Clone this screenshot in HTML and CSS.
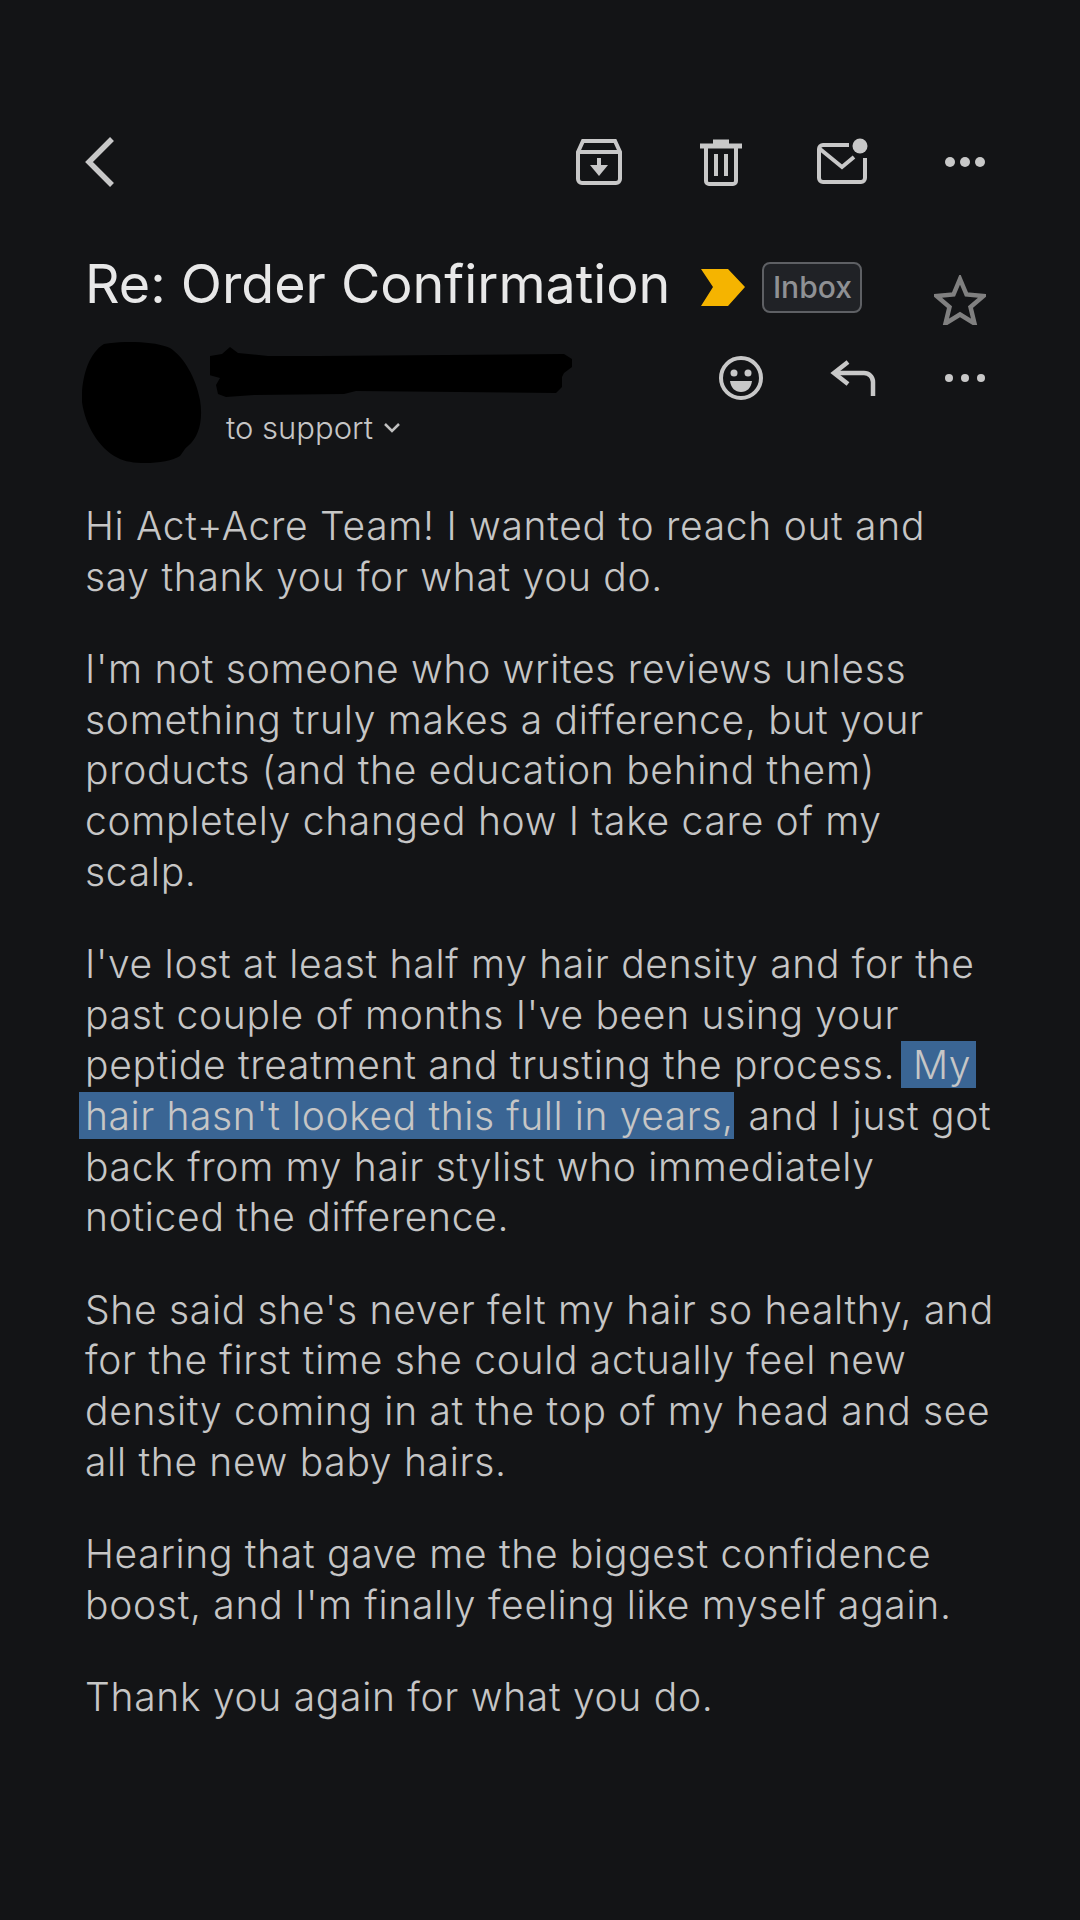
FILE: index.html
```html
<!DOCTYPE html>
<html lang="en">
<head>
  <meta charset="UTF-8">
  <title>Re: Order Confirmation</title>
  <link rel="stylesheet" href="styles.css">
</head>
<body>
  <div class="toolbar">
    <svg class="back-icon" width="32" height="52" viewBox="0 0 32 52"><path d="M28 3 5 26l23 23" fill="none" stroke="#c8c8c8" stroke-width="5.500"/></svg>
    <div class="tool-icons">
      <span class="tool-slot"><svg width="48" height="48" viewBox="0 0 48 48" fill="none" stroke="#c8c8c8" stroke-width="4"><path d="M3 14 8 3h32l5 11v27a4 4 0 0 1-4 4H7a4 4 0 0 1-4-4z"/><path d="M3 14h42"/><path d="M24 20v12" /><path d="M15 27h18l-9 11z" fill="#c8c8c8" stroke="none"/></svg></span>
      <span class="tool-slot"><svg width="42" height="48" viewBox="0 0 42 48" fill="none" stroke="#c8c8c8" stroke-width="4"><path d="M0 8h42" stroke-width="5"/><path d="M13 4h16" stroke-width="5"/><path d="M6 8v35a3 3 0 0 0 3 3h24a3 3 0 0 0 3-3V8"/><path d="M16 16v22M26 16v22"/></svg></span>
      <span class="tool-slot"><svg width="52" height="48" viewBox="0 0 52 48" fill="none" stroke="#c8c8c8" stroke-width="4"><path d="M32 7H6a4 4 0 0 0-4 4v29a4 4 0 0 0 4 4h38a4 4 0 0 0 4-4V20"/><path d="M3 11l22 18 12-10"/><circle cx="43" cy="8" r="7.500" fill="#c8c8c8" stroke="none"/></svg></span>
      <span class="tool-slot"><svg width="40" height="10" viewBox="0 0 40 10" fill="#c8c8c8"><circle cx="5" cy="5" r="5"/><circle cx="20" cy="5" r="5"/><circle cx="35" cy="5" r="5"/></svg></span>
    </div>
  </div>

  <div class="subject-row">
    <h1 class="subject">Re: Order Confirmation</h1>
    <svg class="important" width="44" height="37" viewBox="0 0 44 37"><path d="M0 0h27l17 18-17 19H0l12-19z" fill="#f5b400"/></svg>
    <span class="label">Inbox</span>
    <svg class="star" width="52" height="50" viewBox="0 0 52 50"><path d="M26 4l6.500 15.500 17 1.500-13 11 4 16.500L26 39.500 11.500 48.500l4-16.500-13-11 17-1.500z" fill="none" stroke="#808080" stroke-width="4.500"/></svg>
  </div>

  <div class="sender-row">
    <svg class="avatar" width="120" height="122" viewBox="0 0 120 122"><path d="M22 2C45-2 75 0 88 6c14 9 26 30 30 52 3 18 0 36-12 46-4 3-6 8-8 10-12 8-48 10-62 2C16 106 3 82 0 60-1 40 5 12 22 2z" fill="#000"/></svg>
    <div class="sender-info">
      <svg class="redaction" width="362" height="50" viewBox="0 0 362 50"><path d="M20 0l8 6 30 3 50 0 246-2 8 5v8l-8 6-2 4v10l-6 6-200-2-12 3-90 1-28 2-8-3-2-9 4-7-14-4-2-12 6-6 12-2z" fill="#000"/></svg>
      <div class="recipient">to support
        <svg width="18" height="10" viewBox="0 0 18 10"><path d="M2 1l7 7 7-7" fill="none" stroke="#c0c0c0" stroke-width="2.500"/></svg>
      </div>
    </div>
    <div class="thread-icons">
      <span class="thread-slot"><svg width="44" height="44" viewBox="0 0 44 44"><circle cx="22" cy="22" r="20" fill="none" stroke="#c8c8c8" stroke-width="4"/><circle cx="15" cy="17" r="3.500" fill="#c8c8c8"/><circle cx="29" cy="17" r="3.500" fill="#c8c8c8"/><path d="M11 25h22c-1 7-5 11-11 11s-10-4-11-11z" fill="#c8c8c8"/></svg></span>
      <span class="thread-slot"><svg width="46" height="36" viewBox="0 0 46 36" fill="none" stroke="#c8c8c8" stroke-width="4.500"><path d="M18 2 4 13l14 11"/><path d="M4 13h30a9 9 0 0 1 9 9v14"/></svg></span>
      <span class="thread-slot"><svg width="40" height="8" viewBox="0 0 40 8" fill="#c8c8c8"><circle cx="4" cy="4" r="4"/><circle cx="20" cy="4" r="4"/><circle cx="36" cy="4" r="4"/></svg></span>
    </div>
  </div>

  <div class="message">
    <p>Hi Act+Acre Team! I wanted to reach out and<br>say thank you for what you do.</p>
    <p>I'm not someone who writes reviews unless<br>something truly makes a difference, but your<br>products (and the education behind them)<br>completely changed how I take care of my<br>scalp.</p>
    <p>I've lost at least half my hair density and for the<br>past couple of months I've been using your<br>peptide treatment and trusting the process. <span class="highlight highlight-start">My</span><br><span class="highlight highlight-rest">hair hasn't looked this full in years,</span> and I just got<br>back from my hair stylist who immediately<br>noticed the difference.</p>
    <p>She said she's never felt my hair so healthy, and<br>for the first time she could actually feel new<br>density coming in at the top of my head and see<br>all the new baby hairs.</p>
    <p>Hearing that gave me the biggest confidence<br>boost, and I'm finally feeling like myself again.</p>
    <p>Thank you again for what you do.</p>
  </div>
</body>
</html>
```

FILE: styles.css
```css
html, body {
  height: 100%;
}
body {
  margin: 0;
  background: #131416;
  color: #c6c6c6;
  font-family: Inter, "Liberation Sans", sans-serif;
  overflow: hidden;
}
svg {
  display: block;
  flex: none;
}
.toolbar {
  display: flex;
  justify-content: space-between;
  align-items: center;
  height: 52px;
  padding: 136px 54px 0 84px;
}
.tool-icons, .thread-icons {
  display: flex;
  align-items: center;
}
.tool-slot {
  display: flex;
  justify-content: center;
  width: 122px;
}
.subject-row {
  display: flex;
  align-items: flex-start;
  padding: 64px 0 0 85px;
}
.subject {
  margin: 0;
  font-size: 53.800px;
  line-height: 64px;
  font-weight: 400;
  color: #e8e8e8;
  white-space: nowrap;
}
.important {
  margin: 17px 0 0 31px;
}
.label {
  box-sizing: border-box;
  width: 100px;
  height: 51px;
  margin: 10px 0 0 17px;
  background: #202226;
  border: 2px solid #5e6064;
  border-radius: 8px;
  color: #8f9194;
  font-size: 30px;
  font-weight: 500;
  line-height: 47px;
  text-align: center;
}
.star {
  margin: 23px 0 0 72px;
}
.sender-row {
  display: flex;
  align-items: flex-start;
  padding: 17px 59px 0 82px;
}
.sender-info {
  width: 408px;
  margin-left: 8px;
}
.redaction {
  margin-top: 5px;
}
.recipient {
  display: flex;
  align-items: center;
  gap: 10px;
  margin: 13px 0 0 16px;
  font-size: 31px;
  line-height: 36px;
  font-weight: 300;
}
.thread-icons {
  height: 44px;
  margin-top: 14px;
  margin-left: auto;
}
.thread-slot {
  display: flex;
  justify-content: center;
  width: 112px;
}
.message {
  padding: 37px 0 0 85px;
  font-size: 39px;
  line-height: 50.600px;
  font-weight: 300;
  letter-spacing: 0.7px;
  white-space: nowrap;
}
.message p {
  margin: 0 0 42px;
}
.highlight {
  background: #3a6594;
}
.highlight-start {
  padding: 0 5px 0 12px;
  margin-left: -6px;
}
.highlight-rest {
  margin-right: 3px;
  letter-spacing: 0.6px;
  box-shadow: -6px 0 0 #3a6594;
}
```
